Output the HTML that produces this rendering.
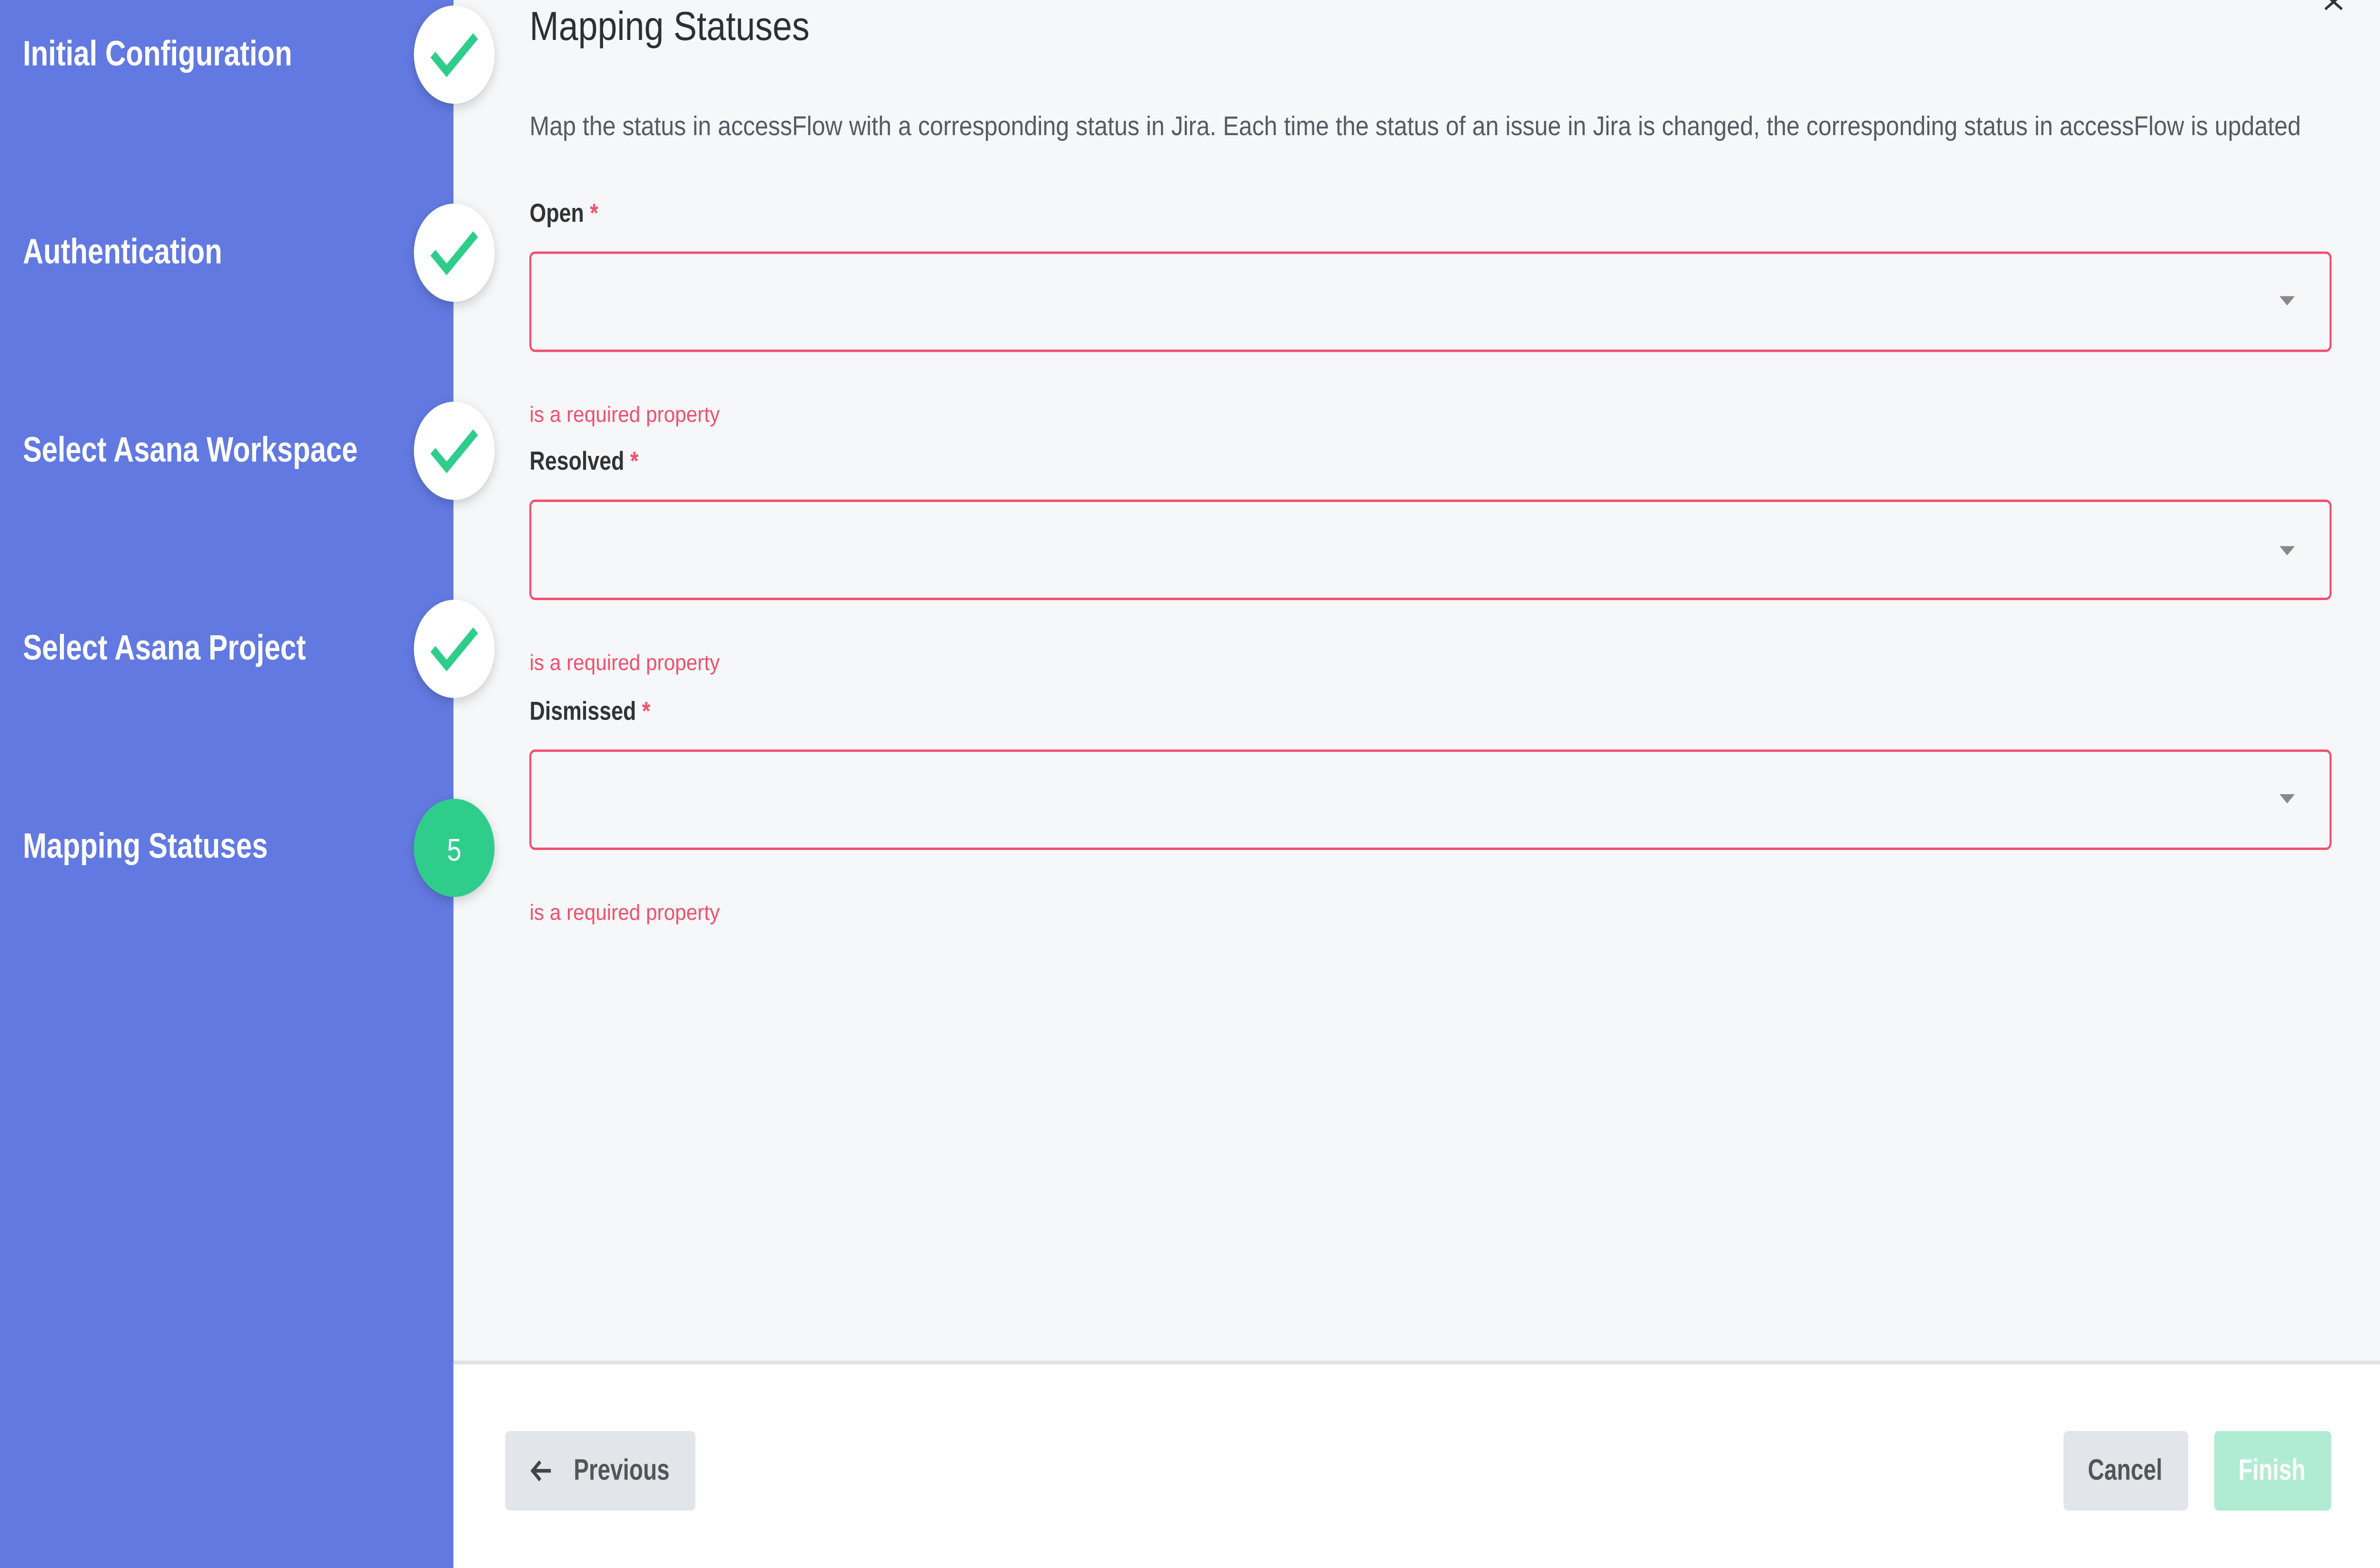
<!DOCTYPE html>
<html><head><meta charset="utf-8"><style>
html,body{margin:0;padding:0;width:100vw;height:100vh;overflow:hidden;background:#f6f7f9}
svg{display:block;width:100vw;height:100vh}
text{font-family:"Liberation Sans",sans-serif}
</style></head><body>
<svg viewBox="0 0 1564 847" preserveAspectRatio="none" xmlns="http://www.w3.org/2000/svg">
<defs>
<filter id="sh" x="-30%" y="-30%" width="160%" height="160%"><feDropShadow dx="0" dy="2" stdDeviation="3" flood-color="#000" flood-opacity="0.18"/></filter>
<g id="ck"><path d="M3 14 L12 23 L31 4" fill="none" stroke="#2fcd8c" stroke-width="4.5"/></g>
</defs>
<rect x="0" y="0" width="1564" height="847" fill="#f6f7f9"/>
<rect x="0" y="0" width="298" height="847" fill="#6279e1"/>
<g fill="#fff" font-weight="bold" font-size="19" dominant-baseline="central">
<text x="15" y="29" textLength="177" lengthAdjust="spacingAndGlyphs">Initial Configuration</text>
<text x="15" y="136" textLength="131" lengthAdjust="spacingAndGlyphs">Authentication</text>
<text x="15" y="243" textLength="220" lengthAdjust="spacingAndGlyphs">Select Asana Workspace</text>
<text x="15" y="350" textLength="186" lengthAdjust="spacingAndGlyphs">Select Asana Project</text>
<text x="15" y="457" textLength="161" lengthAdjust="spacingAndGlyphs">Mapping Statuses</text>
</g>
<g filter="url(#sh)" fill="#fff">
<circle cx="298.5" cy="29.5" r="26.5"/>
<circle cx="298.5" cy="136.5" r="26.5"/>
<circle cx="298.5" cy="243.5" r="26.5"/>
<circle cx="298.5" cy="350.5" r="26.5"/>
<circle cx="298.5" cy="458" r="26.5" fill="#2fcd8c"/>
</g>
<use href="#ck" x="281.5" y="15.5"/>
<use href="#ck" x="281.5" y="122.5"/>
<use href="#ck" x="281.5" y="229.5"/>
<use href="#ck" x="281.5" y="336.5"/>
<text x="298.5" y="459" fill="#fff" font-size="17" text-anchor="middle" dominant-baseline="central">5</text>

<text x="348" y="14" font-size="22" fill="#2d2f33" dominant-baseline="central" textLength="184" lengthAdjust="spacingAndGlyphs">Mapping Statuses</text>
<path d="M1528 -3 L1539 5 M1539 -3 L1528 5" stroke="#333" stroke-width="1.5"/>
<text x="348" y="68" font-size="14.5" fill="#555b63" dominant-baseline="central" textLength="1164" lengthAdjust="spacingAndGlyphs">Map the status in accessFlow with a corresponding status in Jira. Each time the status of an issue in Jira is changed, the corresponding status in accessFlow is updated</text>

<g font-size="14" font-weight="bold" fill="#333" dominant-baseline="central">
<text x="348" y="115">Open <tspan fill="#f0506e">*</tspan></text>
<text x="348" y="249">Resolved <tspan fill="#f0506e">*</tspan></text>
<text x="348" y="384">Dismissed <tspan fill="#f0506e">*</tspan></text>
</g>
<g fill="#f6f7f9" stroke="#f0506e" stroke-width="1.3">
<rect x="348.5" y="136.5" width="1183" height="53" rx="3"/>
<rect x="348.5" y="270.5" width="1183" height="53" rx="3"/>
<rect x="348.5" y="405.5" width="1183" height="53" rx="3"/>
</g>
<g fill="#888">
<path d="M1498 160 L1508 160 L1503 165 Z"/>
<path d="M1498 295 L1508 295 L1503 300 Z"/>
<path d="M1498 429 L1508 429 L1503 434 Z"/>
</g>
<g font-size="12" fill="#f0506e" dominant-baseline="central">
<text x="348" y="224" textLength="125" lengthAdjust="spacingAndGlyphs">is a required property</text>
<text x="348" y="358" textLength="125" lengthAdjust="spacingAndGlyphs">is a required property</text>
<text x="348" y="493" textLength="125" lengthAdjust="spacingAndGlyphs">is a required property</text>
</g>

<rect x="298" y="736" width="1266" height="111" fill="#fff"/>
<rect x="298" y="735" width="1266" height="2" fill="#dde1e6"/>
<rect x="332" y="773" width="125" height="43" rx="3" fill="#e2e6ea"/>
<rect x="1356" y="773" width="82" height="43" rx="3" fill="#e2e6ea"/>
<rect x="1455" y="773" width="77" height="43" rx="3" fill="#b0ecd4"/>
<path d="M362 794.5 H350 M355 789.5 L350 794.5 L355 799.5" fill="none" stroke="#444" stroke-width="2"/>
<g font-size="16" font-weight="bold" dominant-baseline="central">
<text x="377" y="794" fill="#555" textLength="63" lengthAdjust="spacingAndGlyphs">Previous</text>
<text x="1372" y="794" fill="#555" textLength="49" lengthAdjust="spacingAndGlyphs">Cancel</text>
<text x="1471" y="794" fill="#fff" textLength="44" lengthAdjust="spacingAndGlyphs">Finish</text>
</g>
</svg>
</body></html>
